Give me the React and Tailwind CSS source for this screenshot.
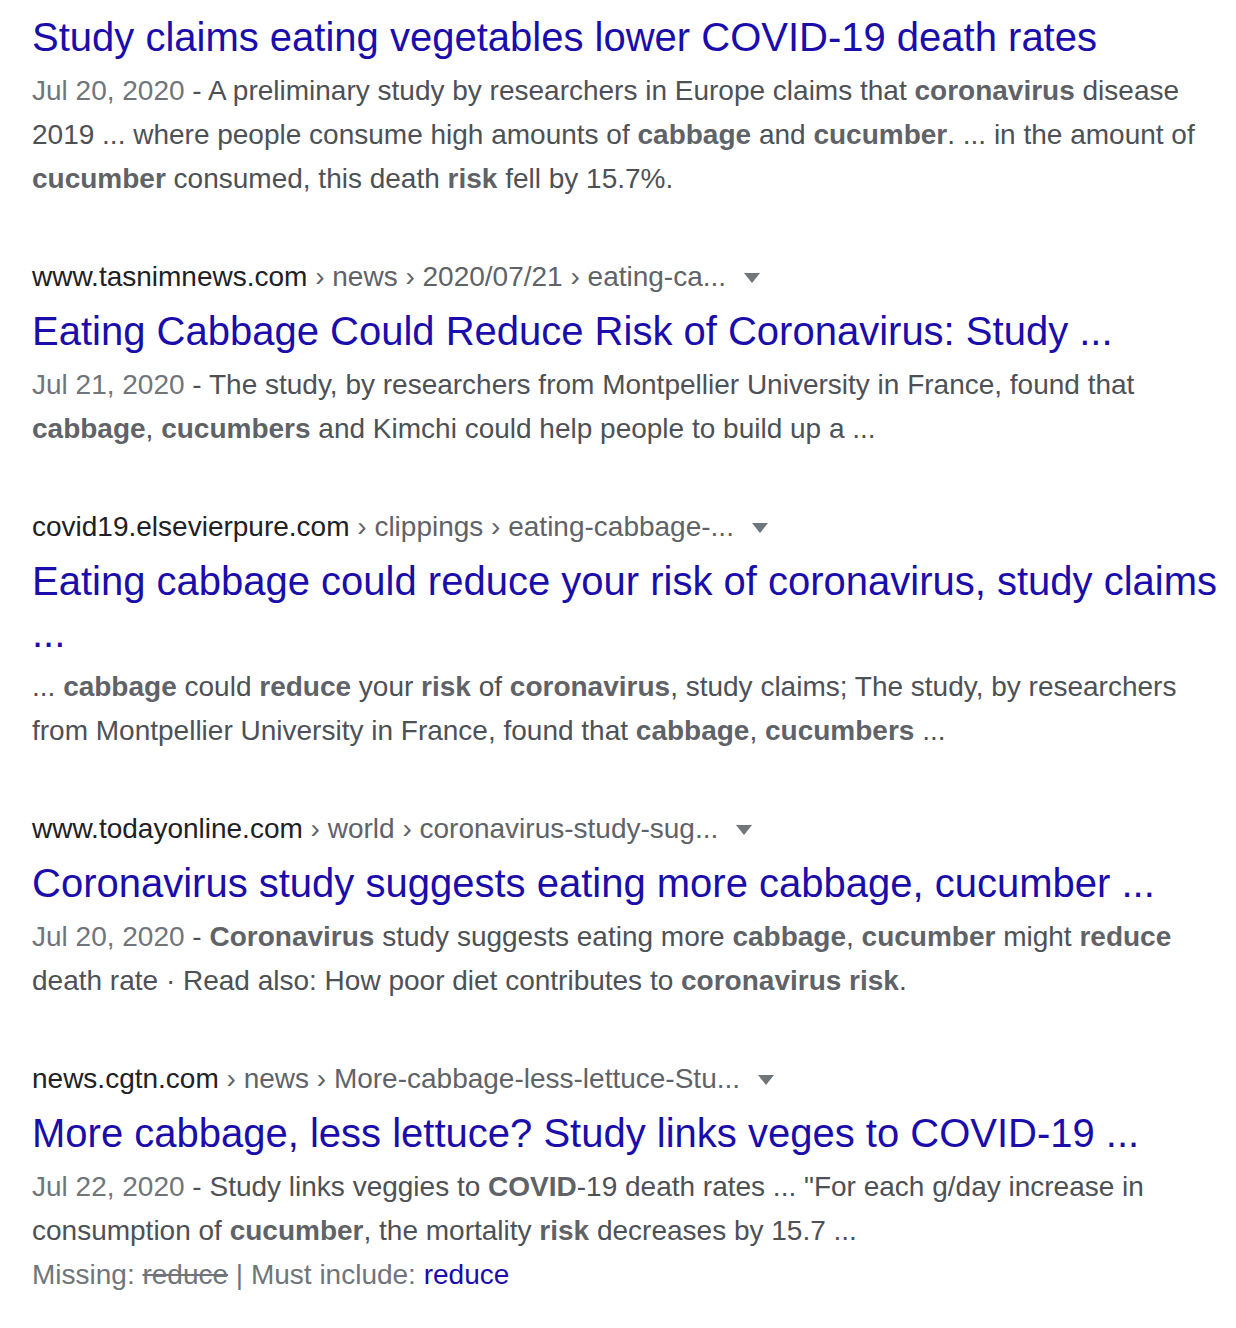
import React from 'react'

const results = [
  {
    url: null,
    title: 'Study claims eating vegetables lower COVID-19 death rates',
    date: 'Jul 20, 2020',
    snippet: [
      'A preliminary study by researchers in Europe claims that ',
      ['coronavirus'],
      ' disease 2019 ... where people consume high amounts of ',
      ['cabbage'],
      ' and ',
      ['cucumber'],
      '. ... in the amount of ',
      ['cucumber'],
      ' consumed, this death ',
      ['risk'],
      ' fell by 15.7%.',
    ],
  },
  {
    url: { domain: 'www.tasnimnews.com', crumbs: ['news', '2020/07/21', 'eating-ca...'] },
    title: 'Eating Cabbage Could Reduce Risk of Coronavirus: Study ...',
    date: 'Jul 21, 2020',
    snippet: [
      'The study, by researchers from Montpellier University in France, found that ',
      ['cabbage'],
      ', ',
      ['cucumbers'],
      ' and Kimchi could help people to build up a ...',
    ],
  },
  {
    url: { domain: 'covid19.elsevierpure.com', crumbs: ['clippings', 'eating-cabbage-...'] },
    title: 'Eating cabbage could reduce your risk of coronavirus, study claims ...',
    date: null,
    snippet: [
      '... ',
      ['cabbage'],
      ' could ',
      ['reduce'],
      ' your ',
      ['risk'],
      ' of ',
      ['coronavirus'],
      ', study claims; The study, by researchers from Montpellier University in France, found that ',
      ['cabbage'],
      ', ',
      ['cucumbers'],
      ' ...',
    ],
  },
  {
    url: { domain: 'www.todayonline.com', crumbs: ['world', 'coronavirus-study-sug...'] },
    title: 'Coronavirus study suggests eating more cabbage, cucumber ...',
    date: 'Jul 20, 2020',
    snippet: [
      ['Coronavirus'],
      ' study suggests eating more ',
      ['cabbage'],
      ', ',
      ['cucumber'],
      ' might ',
      ['reduce'],
      ' death rate · Read also: How poor diet contributes to ',
      ['coronavirus risk'],
      '.',
    ],
  },
  {
    url: { domain: 'news.cgtn.com', crumbs: ['news', 'More-cabbage-less-lettuce-Stu...'] },
    title: 'More cabbage, less lettuce? Study links veges to COVID-19 ...',
    date: 'Jul 22, 2020',
    snippet: [
      'Study links veggies to ',
      ['COVID'],
      '-19 death rates ... "For each g/day increase in consumption of ',
      ['cucumber'],
      ', the mortality ',
      ['risk'],
      ' decreases by 15.7 ...',
    ],
    missing: true,
  },
]

function UrlLine({ url }) {
  return (
    <div className="flex items-center h-[36px] leading-[36px] text-[28px] whitespace-nowrap">
      <span>
        <span className="text-[#202124]">{url.domain}</span>
        <span className="text-[#5f6368]">{url.crumbs.map((c) => ' › ' + c).join('')}</span>
      </span>
      <span className="ml-[18px] mt-[2px] w-0 h-0 border-t-[10px] border-t-[#70757a] border-x-[8px] border-x-transparent" />
    </div>
  )
}

function Result({ r, first }) {
  return (
    <div className={first ? '' : 'mt-[58px]'}>
      {r.url && <UrlLine url={r.url} />}
      <h3 className={`text-[40px] leading-[52px] text-[#1a0dab] font-normal ${r.url ? 'mt-[10px]' : ''}`}>
        {r.title}
      </h3>
      <div className="mt-[6px] text-[28px] leading-[44px] text-[#4d5156]">
        {r.date && (
          <>
            <span className="text-[#70757a]">{r.date}</span>
            {' - '}
          </>
        )}
        {r.snippet.map((s, i) =>
          Array.isArray(s) ? (
            <b key={i} className="font-bold text-[#5f6368]">
              {s[0]}
            </b>
          ) : (
            <span key={i}>{s}</span>
          )
        )}
      </div>
      {r.missing && (
        <div className="text-[28px] leading-[44px] text-[#70757a]">
          Missing: <s>reduce</s> | Must include: <span className="text-[#1a0dab]">reduce</span>
        </div>
      )}
    </div>
  )
}

export default function App() {
  return (
    <div className="min-h-screen bg-white font-['Liberation_Sans',Arial,sans-serif]">
      <div className="w-[1232px] pl-[32px] pt-[11px]">
        {results.map((r, i) => (
          <Result key={i} r={r} first={i === 0} />
        ))}
      </div>
    </div>
  )
}
